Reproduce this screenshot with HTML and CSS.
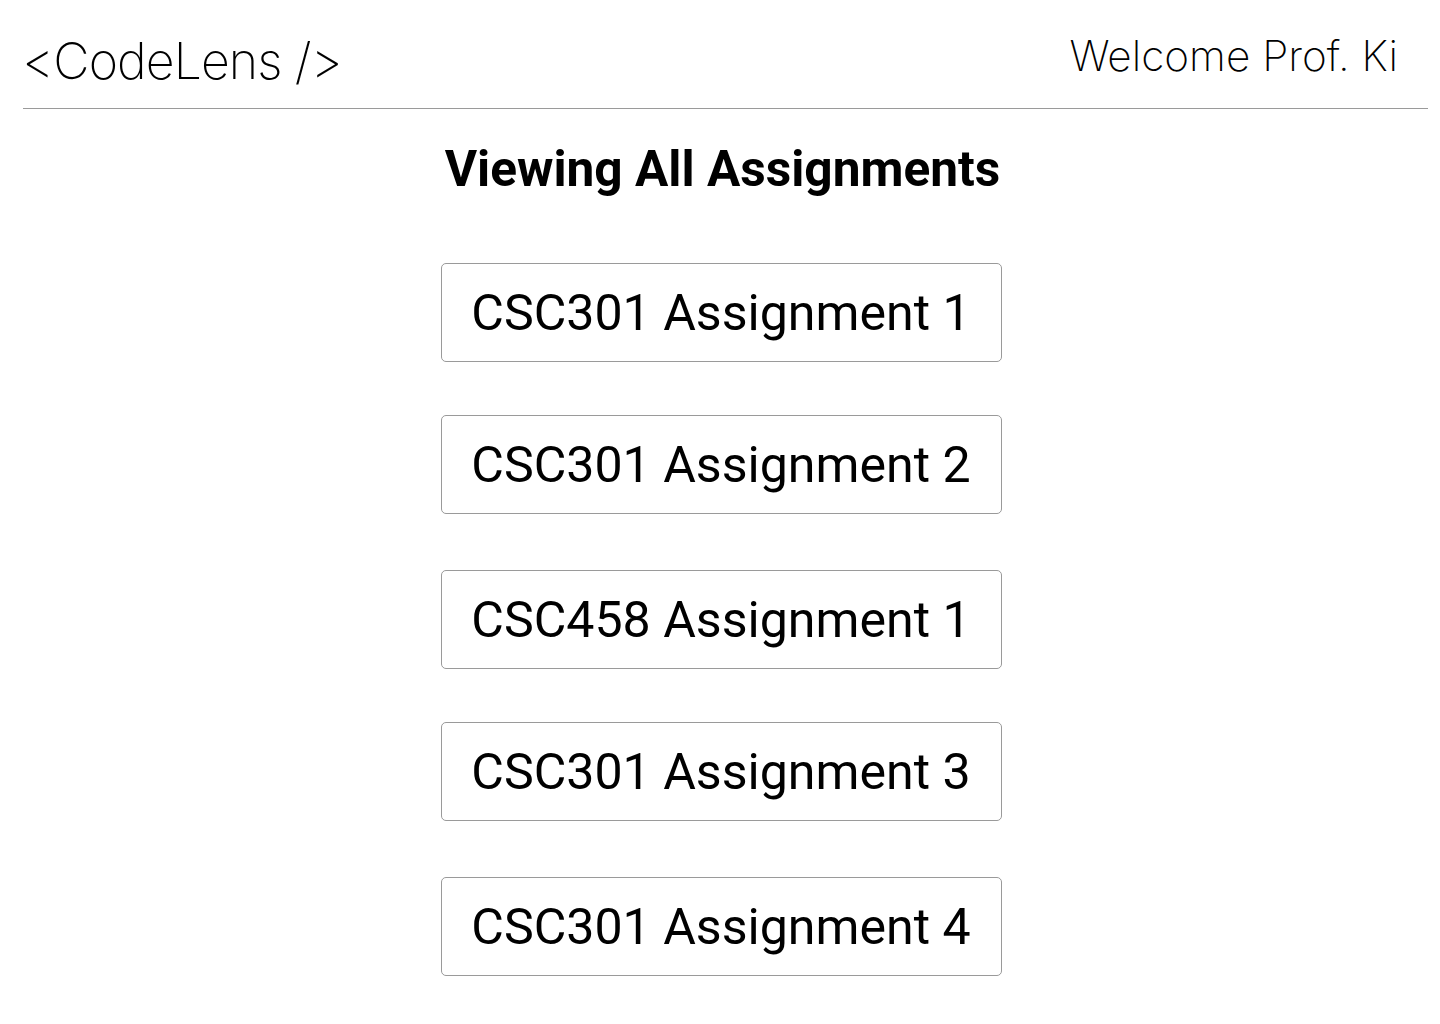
FILE: index.html
```html
<!DOCTYPE html>
<html lang="en">
<head>
<meta charset="utf-8">
<title>CodeLens - Assignments</title>
<link rel="stylesheet" href="styles.css">
</head>
<body>
<header class="topbar">
  <div class="logo">&lt;CodeLens /&gt;</div>
  <div class="welcome">Welcome Prof. Ki</div>
</header>
<main class="content">
  <h1 class="title">Viewing All Assignments</h1>
  <ul class="list">
    <li class="item">CSC301 Assignment 1</li>
    <li class="item">CSC301 Assignment 2</li>
    <li class="item">CSC458 Assignment 1</li>
    <li class="item">CSC301 Assignment 3</li>
    <li class="item">CSC301 Assignment 4</li>
  </ul>
</main>
</body>
</html>
```
FILE: styles.css
```css
html, body {
  margin: 0;
  padding: 0;
  background: #ffffff;
}
body {
  width: 1440px;
  height: 1024px;
  overflow: hidden;
  color: #000;
}
.topbar {
  margin-left: 23px;
  width: 1405px;
  height: 108px;
  border-bottom: 1px solid #9a9a9a;
  display: flex;
  justify-content: space-between;
  align-items: flex-start;
  box-sizing: content-box;
}
.logo {
  font-family: "Inter", "Liberation Sans", sans-serif;
  font-weight: 200;
  font-size: 50px;
  line-height: 60px;
  margin-top: 31px;
  margin-left: -1px;
  letter-spacing: -0.9px;
}
.welcome {
  font-family: "Inter", "Liberation Sans", sans-serif;
  font-weight: 200;
  font-size: 42.3px;
  line-height: 50px;
  margin-top: 31px;
  margin-right: 30px;
}
.content {
  display: flex;
  flex-direction: column;
  align-items: center;
}
.title {
  font-family: Roboto, "Liberation Sans", sans-serif;
  font-weight: 700;
  font-size: 49.6px;
  line-height: 56px;
  margin: 32px 0 0 0;
  padding-left: 5px;
}
.list {
  list-style: none;
  margin: 66px 0 0 0;
  padding: 0;
  display: flex;
  flex-direction: column;
  gap: 53px;
}
.item {
  width: 559px;
  height: 97px;
  border: 1px solid #9a9a9a;
  border-radius: 5px;
  display: flex;
  align-items: center;
  justify-content: center;
  font-family: Roboto, "Liberation Sans", sans-serif;
  font-size: 50.1px;
  font-weight: 400;
  margin-left: 2px;
}
.item:nth-child(even) {
  margin-bottom: 3px;
}
```
